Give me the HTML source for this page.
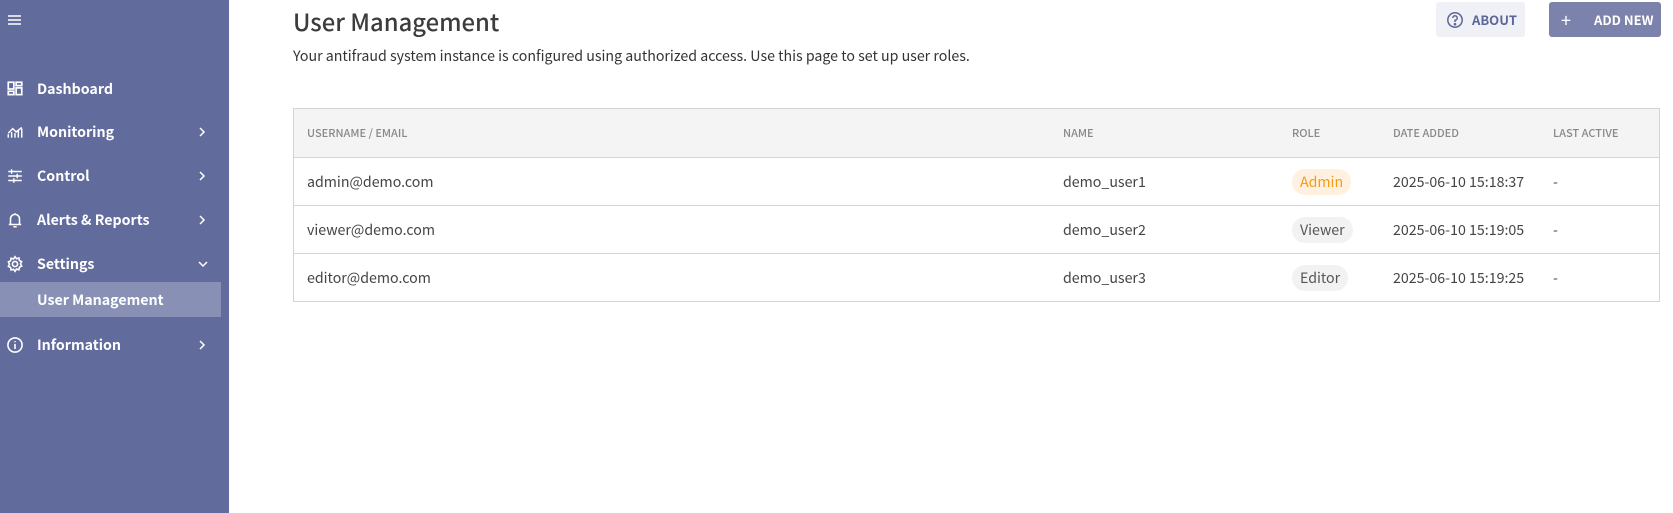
<!DOCTYPE html>
<html><head><meta charset="utf-8"><style>
*{box-sizing:border-box;margin:0;padding:0}
body{width:1673px;height:513px;overflow:hidden;background:#fff;font-family:"Noto Sans CJK JP","Liberation Sans",sans-serif;color:#333;position:relative}
.sb{position:absolute;left:0;top:0;width:229px;height:513px;background:#616b9c;color:#fff}
.it{position:absolute;left:0;height:30px;width:221px;display:flex;align-items:center;font-weight:bold;font-size:14.2px}
.it svg.ic{position:absolute;left:6px}
.it span{position:absolute;left:37px}
.it .ch{position:absolute;left:197px}
.sel{background:#8890b5}
h1{position:absolute;left:293px;top:3px;font-size:23.8px;font-weight:500;color:#3c3c3c}
.sub{position:absolute;left:293px;top:46px;font-size:14.2px;color:#333}
.btn{position:absolute;top:2px;height:35px;border-radius:3px;font-size:13px;font-weight:bold;display:flex;align-items:center}
.tbl{position:absolute;left:293px;top:108px;width:1367px;height:194px;border:1px solid #d4d4d4}
.hd{position:absolute;left:0;top:0;right:0;height:49px;background:#f4f4f4;border-bottom:1px solid #d4d4d4}
.row{position:absolute;left:0;right:0;height:48px;border-bottom:1px solid #d4d4d4}
.c{position:absolute;top:50%;transform:translateY(-50%);font-size:14.2px;color:#444;white-space:nowrap}
.hd .c{font-size:11px;color:#888;font-weight:500}
.pill{padding:3px 8px;border-radius:14px;background:#f2f2f2;color:#555}
</style></head><body>
<div class="sb">
<svg style="position:absolute;left:8px;top:14px" width="14" height="12"><path d="M0 2h13M0 6h13M0 10h13" stroke="#fff" stroke-width="1.5"/></svg>
<div class="it" style="top:74px"><svg class="ic" width="18" height="18" viewBox="0 0 16 16" fill="none" stroke="#fff" stroke-width="1.5"><rect x="2" y="2" width="5" height="6"/><rect x="9" y="2" width="5" height="3"/><rect x="2" y="10" width="5" height="3"/><rect x="9" y="7" width="5" height="6"/></svg><span>Dashboard</span></div>
<div class="it" style="top:117px"><svg class="ic" width="18" height="18" viewBox="0 0 16 16" fill="none" stroke="#fff" stroke-width="1.3"><path d="M2 13V10M5 13V8M8 13V9M11 13V7M14 13V5M2 9l4-4 3 3 5-4"/></svg><span>Monitoring</span><svg class="ch" width="10" height="12"><path d="M3 2l4 4-4 4" stroke="#fff" stroke-width="1.5" fill="none"/></svg></div>
<div class="it" style="top:161px"><svg class="ic" width="18" height="18" viewBox="0 0 16 16" fill="none" stroke="#fff" stroke-width="1.3"><path d="M2 4h12M2 8h12M2 12h12M5 2v4M10 6v4M7 10v4"/></svg><span>Control</span><svg class="ch" width="10" height="12"><path d="M3 2l4 4-4 4" stroke="#fff" stroke-width="1.5" fill="none"/></svg></div>
<div class="it" style="top:205px"><svg class="ic" width="18" height="18" viewBox="0 0 16 16" fill="none" stroke="#fff" stroke-width="1.4"><path d="M4 12V7a4 4 0 0 1 8 0v5M2.5 12h11M8 2v1M6.5 14h3"/></svg><span>Alerts &amp; Reports</span><svg class="ch" width="10" height="12"><path d="M3 2l4 4-4 4" stroke="#fff" stroke-width="1.5" fill="none"/></svg></div>
<div class="it" style="top:249px"><svg class="ic" width="18" height="18" viewBox="0 0 16 16" fill="none" stroke="#fff" stroke-width="1.4"><circle cx="8" cy="8" r="2.3"/><path d="M8 1.5l1.3 1.8 2.2-.6.4 2.2 2 1-1 2 1 2-2 1-.4 2.2-2.2-.6L8 14.5l-1.3-1.8-2.2.6-.4-2.2-2-1 1-2-1-2 2-1 .4-2.2 2.2.6z"/></svg><span>Settings</span><svg class="ch" width="12" height="12"><path d="M2 4l4 4 4-4" stroke="#fff" stroke-width="1.5" fill="none"/></svg></div>
<div class="it sel" style="top:282px;height:35px"><span>User Management</span></div>
<div class="it" style="top:330px"><svg class="ic" width="18" height="18" viewBox="0 0 16 16" fill="none" stroke="#fff" stroke-width="1.4"><circle cx="8" cy="8" r="6.3"/><path d="M8 7v4.5M8 4.5v1"/></svg><span>Information</span><svg class="ch" width="10" height="12"><path d="M3 2l4 4-4 4" stroke="#fff" stroke-width="1.5" fill="none"/></svg></div>
</div>
<h1>User Management</h1>
<div class="sub">Your antifraud system instance is configured using authorized access. Use this page to set up user roles.</div>
<div class="btn" style="left:1436px;width:89px;background:#f0f1f6;color:#5d6699"><svg style="margin-left:10px" width="18" height="18" viewBox="0 0 18 18" fill="none" stroke="#5d6699" stroke-width="1.5"><circle cx="9" cy="9" r="7.2"/><path d="M6.8 7a2.2 2.2 0 1 1 2.2 2.2V11"/><circle cx="9" cy="13.2" r=".6" fill="#5d6699"/></svg><span style="margin-left:8px">ABOUT</span></div>
<div class="btn" style="left:1549px;width:112px;background:#7b82ab;color:#fff"><span style="margin-left:12px;font-size:18px;font-weight:400">+</span><span style="margin-left:23px">ADD NEW</span></div>
<div class="tbl">
<div class="hd"><div class="c" style="left:13px">USERNAME / EMAIL</div><div class="c" style="left:769px">NAME</div><div class="c" style="left:998px">ROLE</div><div class="c" style="left:1099px">DATE ADDED</div><div class="c" style="left:1259px">LAST ACTIVE</div></div>
<div class="row" style="top:49px"><div class="c" style="left:13px">admin@demo.com</div><div class="c" style="left:769px">demo_user1</div><div class="c pill" style="left:998px;background:#fff0e0;color:#f39c12">Admin</div><div class="c" style="left:1099px">2025-06-10 15:18:37</div><div class="c" style="left:1259px">-</div></div>
<div class="row" style="top:97px"><div class="c" style="left:13px">viewer@demo.com</div><div class="c" style="left:769px">demo_user2</div><div class="c pill" style="left:998px">Viewer</div><div class="c" style="left:1099px">2025-06-10 15:19:05</div><div class="c" style="left:1259px">-</div></div>
<div class="row" style="top:145px;border-bottom:none"><div class="c" style="left:13px">editor@demo.com</div><div class="c" style="left:769px">demo_user3</div><div class="c pill" style="left:998px">Editor</div><div class="c" style="left:1099px">2025-06-10 15:19:25</div><div class="c" style="left:1259px">-</div></div>
</div>
</body></html>
